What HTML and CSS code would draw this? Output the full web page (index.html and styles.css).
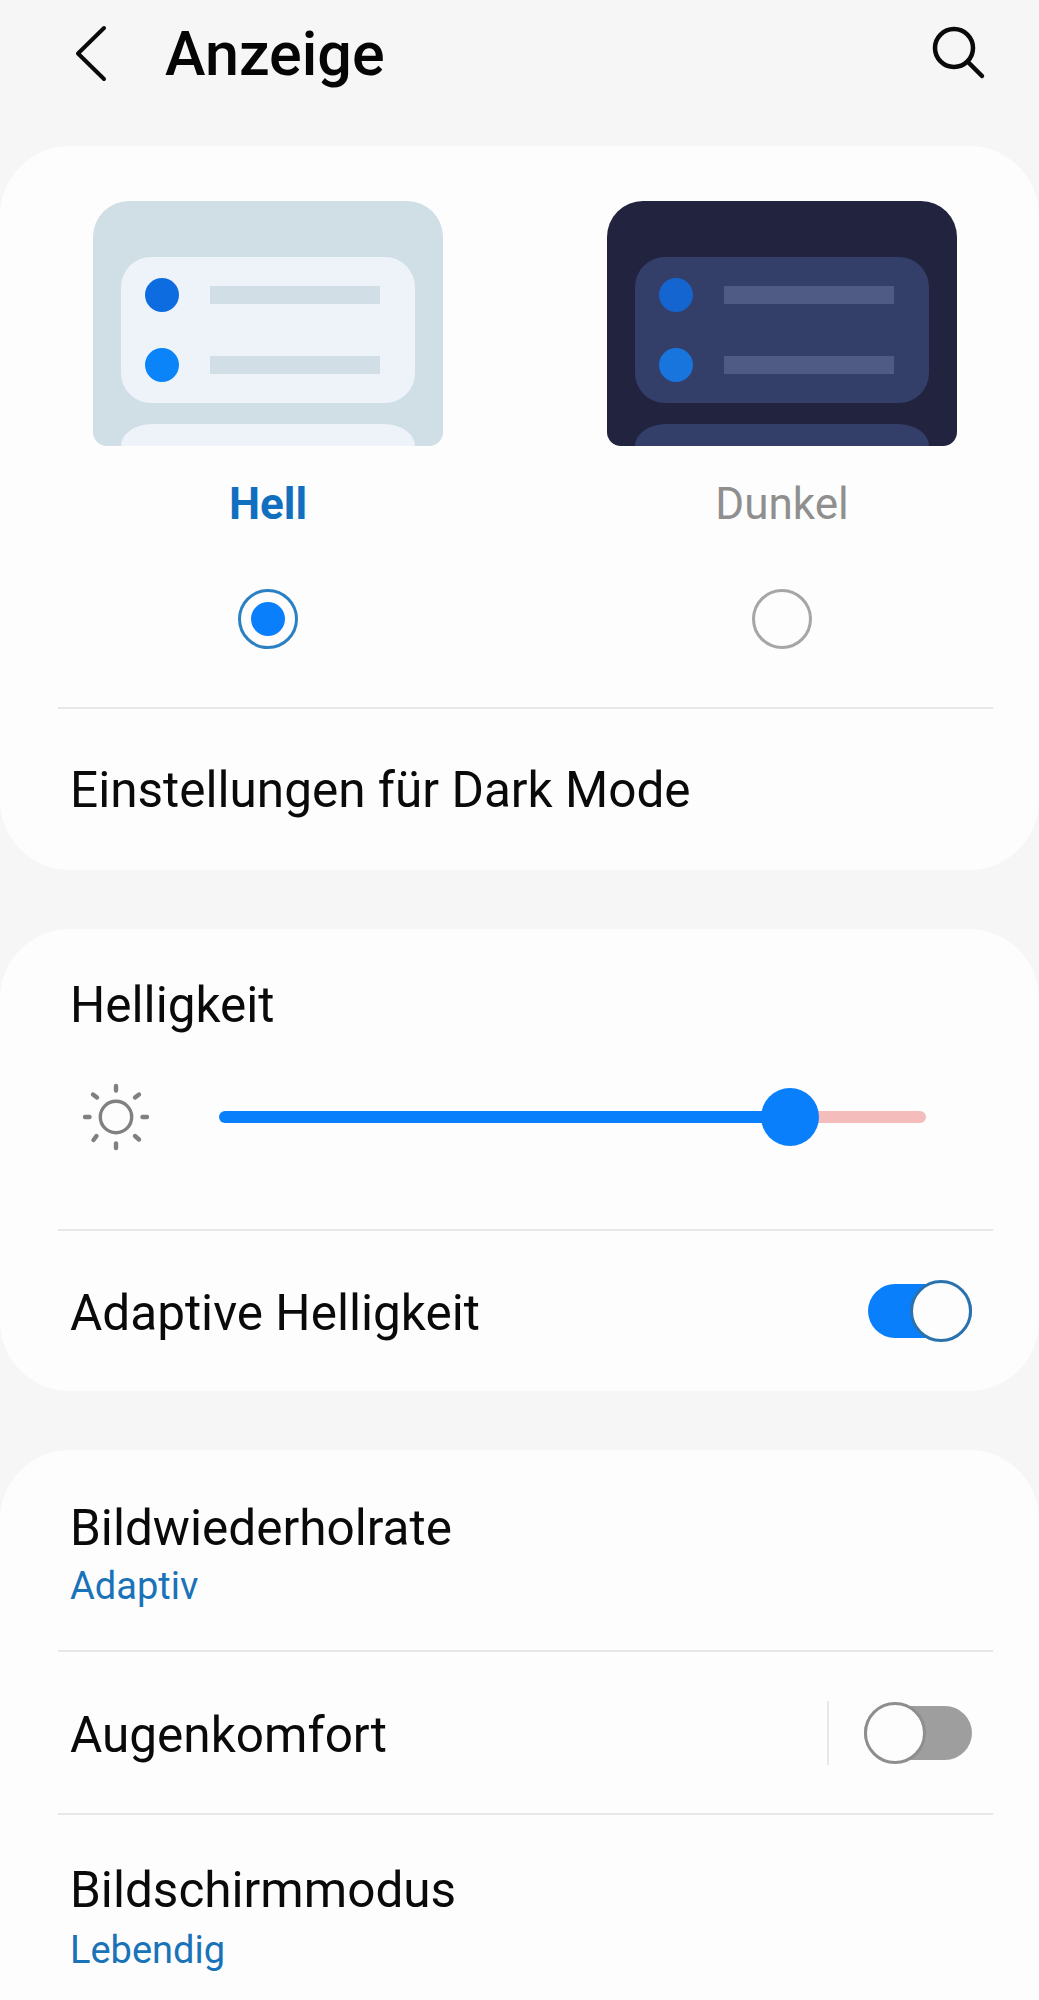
FILE: index.html
```html
<!DOCTYPE html>
<html lang="de">
  <head>
    <meta charset="UTF-8">
    <title>Anzeige</title>
    <link rel="stylesheet" href="styles.css">
  </head>
  <body>
    <header class="top-bar">
      <svg class="back-icon" width="36" height="60" viewBox="0 0 36 60" fill="none" stroke="#0a0a0a" stroke-width="4" stroke-linecap="round" stroke-linejoin="round">
        <path d="M31 4 L5 29.5 L31 55"/>
      </svg>
      <h1>Anzeige</h1>
      <svg class="search-icon" width="56" height="56" viewBox="0 0 56 56" fill="none" stroke="#0a0a0a" stroke-width="4.5" stroke-linecap="round">
        <circle cx="23" cy="23" r="19"/>
        <path d="M37 37 L51 51"/>
      </svg>
    </header>

    <section class="card">
      <div class="theme-options">
        <div class="theme-option">
          <div class="preview preview-light">
            <div class="preview-panel">
              <div class="preview-row"><span class="dot dot-a"></span><span class="bar"></span></div>
              <div class="preview-row"><span class="dot dot-b"></span><span class="bar"></span></div>
            </div>
            <div class="preview-next"></div>
          </div>
          <div class="theme-label selected">Hell</div>
          <div class="radio selected"></div>
        </div>
        <div class="theme-option">
          <div class="preview preview-dark">
            <div class="preview-panel">
              <div class="preview-row"><span class="dot dot-a"></span><span class="bar"></span></div>
              <div class="preview-row"><span class="dot dot-b"></span><span class="bar"></span></div>
            </div>
            <div class="preview-next"></div>
          </div>
          <div class="theme-label">Dunkel</div>
          <div class="radio"></div>
        </div>
      </div>
      <div class="divider"></div>
      <div class="row row-dark-mode">Einstellungen für Dark Mode</div>
    </section>

    <section class="card">
      <div class="brightness">
        <div class="row-title">Helligkeit</div>
        <div class="slider-row">
          <svg class="sun-icon" width="70" height="70" viewBox="0 0 70 70" fill="none" stroke="#808080" stroke-linecap="round">
            <circle cx="35" cy="35" r="15.7" stroke-width="3.4"/>
            <g stroke-width="4.4">
              <path d="M35 4 V8.5"/>
              <path d="M35 61.5 V66"/>
              <path d="M4 35 H8.5"/>
              <path d="M61.5 35 H66"/>
              <path d="M12 12.5 L16 15.5"/>
              <path d="M54 15.5 L58 12.5"/>
              <path d="M12.5 58 L15.5 54"/>
              <path d="M54 54 L58 57.5"/>
            </g>
          </svg>
          <div class="slider">
            <div class="slider-fill" style="width: 80.7%"></div>
            <div class="slider-rest"></div>
            <div class="slider-thumb" style="left: 80.7%"></div>
          </div>
        </div>
      </div>
      <div class="divider"></div>
      <div class="row row-adaptive">
        <span>Adaptive Helligkeit</span>
        <div class="toggle on"><div class="toggle-thumb"></div></div>
      </div>
    </section>

    <section class="card card-last">
      <div class="row-stacked">
        <div class="row-title">Bildwiederholrate</div>
        <div class="row-sub">Adaptiv</div>
      </div>
      <div class="divider"></div>
      <div class="row row-eye">
        <span>Augenkomfort</span>
        <div class="row-end">
          <div class="vline"></div>
          <div class="toggle"><div class="toggle-thumb"></div></div>
        </div>
      </div>
      <div class="divider"></div>
      <div class="row-stacked row-stacked-last">
        <div class="row-title">Bildschirmmodus</div>
        <div class="row-sub">Lebendig</div>
      </div>
    </section>
  </body>
</html>
```

FILE: styles.css
```css
html, body {
  height: 2000px;
  overflow: hidden;
}

body {
  font-family: Roboto, "Noto Sans", sans-serif;
  margin: 0;
  padding: 0;
  background-color: #f6f6f6;
  color: #0a0a0a;
}

.top-bar {
  display: flex;
  align-items: center;
  height: 96px;
  margin-bottom: 44px;
  padding: 6px 52px 0 73px;
}

.top-bar h1 {
  flex: 1;
  margin: 0 0 0 56px;
  font-size: 61px;
  font-weight: 500;
  color: #050505;
}

.back-icon {
  flex: none;
}

.search-icon {
  flex: none;
  margin-top: -2px;
}

.card {
  background-color: #fdfdfd;
  border-radius: 70px;
  margin-bottom: 59px;
}

.card-last {
  height: 640px;
  margin-bottom: 0;
}

.divider {
  height: 2px;
  margin: 0 46px 0 58px;
  background-color: #e7e7e7;
}

/* theme chooser */
.theme-options {
  display: flex;
  gap: 164px;
  padding: 55px 0 58px 93px;
}

.theme-option {
  display: flex;
  flex-direction: column;
  align-items: center;
  width: 350px;
}

.preview {
  width: 350px;
  height: 245px;
  padding: 56px 28px 0;
  box-sizing: border-box;
  border-radius: 36px 36px 14px 14px;
  overflow: hidden;
}

.preview-panel {
  height: 146px;
  padding: 21px 24px;
  box-sizing: border-box;
  border-radius: 30px;
  display: flex;
  flex-direction: column;
  gap: 36px;
}

.preview-next {
  height: 22px;
  margin-top: 21px;
  border-radius: 42px 42px 0 0 / 30px 30px 0 0;
}

.preview-row {
  display: flex;
  align-items: center;
  gap: 31px;
}

.dot {
  width: 34px;
  height: 34px;
  border-radius: 50%;
}

.bar {
  width: 170px;
  height: 18px;
}

.preview-light {
  background-color: #d0dee6;
}

.preview-light .preview-panel,
.preview-light .preview-next {
  background-color: #edf3f9;
}

.preview-light .bar {
  background-color: #d1dee5;
}

.preview-light .dot-a {
  background-color: #0d6de0;
}

.preview-light .dot-b {
  background-color: #0a84f8;
}

.preview-dark {
  background-color: #22233f;
}

.preview-dark .preview-panel,
.preview-dark .preview-next {
  background-color: #333f68;
}

.preview-dark .bar {
  background-color: #4f5b84;
}

.preview-dark .dot-a {
  background-color: #1565d0;
}

.preview-dark .dot-b {
  background-color: #1875de;
}

.theme-label {
  margin-top: 34px;
  font-size: 44px;
  line-height: 48px;
  color: #8f8f8f;
}

.theme-label.selected {
  font-weight: 700;
  color: #126fbf;
}

.radio {
  position: relative;
  width: 60px;
  height: 60px;
  margin-top: 61px;
  box-sizing: border-box;
  border: 3px solid #a6a6a6;
  border-radius: 50%;
}

.radio.selected {
  border-color: #2a80c4;
}

.radio.selected::after {
  content: "";
  position: absolute;
  top: 10px;
  left: 10px;
  width: 34px;
  height: 34px;
  border-radius: 50%;
  background-color: #0a7ffb;
}

/* rows */
.row {
  display: flex;
  align-items: center;
  justify-content: space-between;
  padding: 0 67px 0 70px;
  font-size: 49.5px;
}

.row-dark-mode {
  height: 161px;
}

.row-adaptive {
  height: 160px;
}

.row-adaptive span,
.row-eye span {
  margin-top: 4px;
}

.row-eye {
  height: 161px;
}

.row-title {
  font-size: 49.5px;
  line-height: 56px;
}

.row-sub {
  margin-top: 8px;
  font-size: 38px;
  line-height: 44px;
  color: #1a73b8;
}

.row-stacked {
  padding: 50px 67px 0 70px;
  height: 150px;
}

.row-stacked-last {
  padding-top: 47px;
  height: 153px;
}

.row-stacked-last .row-sub {
  margin-top: 10px;
}

.row-end {
  display: flex;
  align-items: center;
  gap: 35px;
}

.vline {
  width: 2px;
  height: 64px;
  background-color: #e7e7e7;
}

/* brightness */
.brightness {
  height: 300px;
  padding: 48px 113px 0 70px;
  box-sizing: border-box;
}

.slider-row {
  display: flex;
  align-items: center;
  height: 70px;
  margin-top: 49px;
  margin-left: 11px;
  gap: 68px;
}

.sun-icon {
  flex: none;
}

.slider {
  position: relative;
  display: flex;
  flex: 1;
  height: 12px;
}

.slider-fill {
  height: 12px;
  background-color: #0a7ffb;
  border-radius: 6px 0 0 6px;
}

.slider-rest {
  flex: 1;
  height: 12px;
  background-color: #f5bcbc;
  border-radius: 0 6px 6px 0;
}

.slider-thumb {
  position: absolute;
  top: -23px;
  width: 58px;
  height: 58px;
  margin-left: -29px;
  border-radius: 50%;
  background-color: #0a7ffb;
}

/* switches */
.toggle {
  position: relative;
  flex: none;
  width: 108px;
  height: 54px;
  border-radius: 27px;
  background-color: #9e9e9e;
}

.toggle.on {
  width: 104px;
  background-color: #0a7ffb;
}

.toggle-thumb {
  position: absolute;
  top: -4px;
  left: 0;
  width: 62px;
  height: 62px;
  box-sizing: border-box;
  border: 3px solid #8e8e8e;
  border-radius: 50%;
  background-color: #fdfdfd;
}

.toggle.on .toggle-thumb {
  left: 42px;
  border-color: #2a72ad;
}
```
